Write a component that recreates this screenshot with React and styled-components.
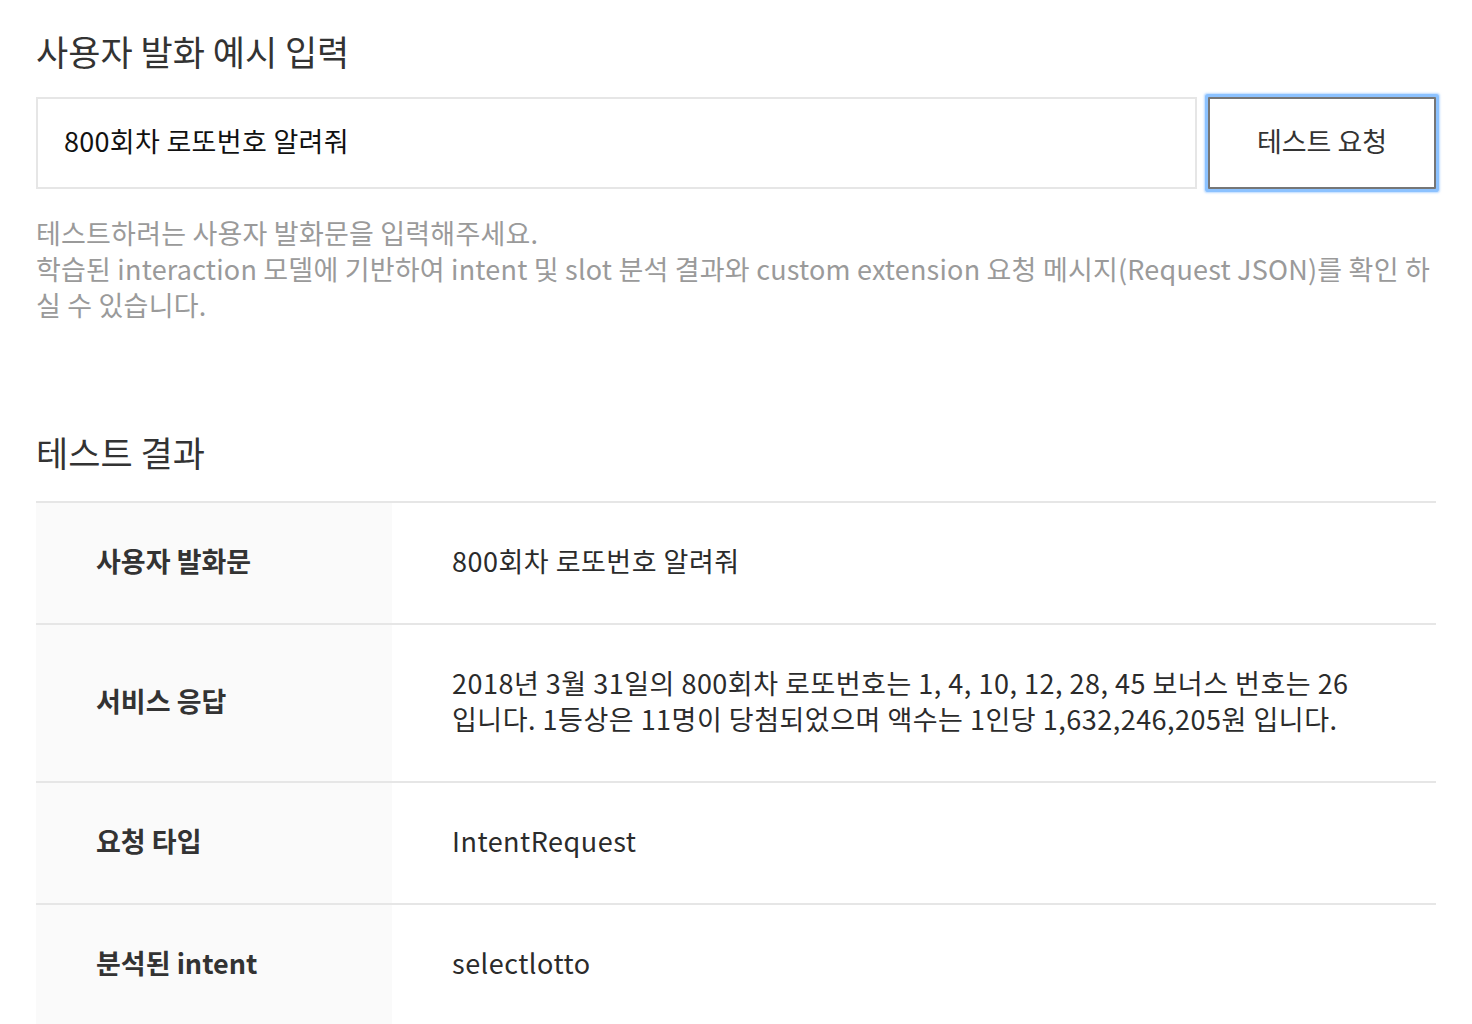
import React from "react";
import styled, { createGlobalStyle } from "styled-components";

const GlobalStyle = createGlobalStyle`
  body {
    margin: 0;
    background: #ffffff;
    font-family: "Noto Sans CJK KR", "Noto Sans", sans-serif;
    color: #333333;
  }
`;

const Page = styled.div`
  width: 1400px;
  padding: 27px 0 0 36px;
`;

const Heading = styled.h2`
  margin: 0;
  font-size: 35px;
  line-height: 48px;
  font-weight: 400;
  color: #333333;
`;

const InputRow = styled.div`
  display: flex;
  align-items: stretch;
  gap: 11px;
  margin-top: 22px;
`;

const TextBox = styled.div`
  box-sizing: border-box;
  width: 1161px;
  height: 92px;
  border: 2px solid #e6e6e6;
  padding: 0 26px 5px;
  display: flex;
  align-items: center;
  font-size: 27px;
  color: #111111;
  letter-spacing: 0.3px;
`;

const TestButton = styled.button`
  box-sizing: border-box;
  width: 228px;
  height: 92px;
  padding: 0 0 5px;
  border: 2px solid #767676;
  background: #ffffff;
  font-family: inherit;
  font-size: 27px;
  color: #333333;
  box-shadow: 0 0 0 3px #8cc2ff, 0 0 2px 4px rgba(140, 194, 255, 0.6);
  border-radius: 1px;
`;

const Help = styled.p`
  margin: 26px 0 0;
  font-size: 27px;
  line-height: 36px;
  color: #9a9a9a;
  letter-spacing: 0.2px;
`;

const ResultHeading = styled(Heading)`
  margin-top: 105px;
`;

const Table = styled.div`
  margin-top: 25px;
  border-top: 2px solid #e6e6e6;
`;

const Row = styled.div`
  display: grid;
  grid-template-columns: 356px 1fr;
  border-bottom: 2px solid #e6e6e6;
`;

const Label = styled.div`
  background: #fafafa;
  padding: 40px 0 44px 60px;
  font-size: 27px;
  line-height: 36px;
  font-weight: 700;
  color: #333333;
  display: flex;
  align-items: center;
`;

const Value = styled.div`
  padding: 40px 34px 44px 60px;
  font-size: 27px;
  line-height: 36px;
  color: #2b2b2b;
  letter-spacing: 0.5px;
  word-break: keep-all;
`;

const rows = [
  ["사용자 발화문", "800회차 로또번호 알려줘"],
  [
    "서비스 응답",
    "2018년 3월 31일의 800회차 로또번호는 1, 4, 10, 12, 28, 45 보너스 번호는 26 입니다. 1등상은 11명이 당첨되었으며 액수는 1인당 1,632,246,205원 입니다.",
  ],
  ["요청 타입", "IntentRequest"],
  ["분석된 intent", "selectlotto"],
];

export default function App() {
  return (
    <Page>
      <GlobalStyle />
      <Heading>사용자 발화 예시 입력</Heading>
      <InputRow>
        <TextBox>800회차 로또번호 알려줘</TextBox>
        <TestButton>테스트 요청</TestButton>
      </InputRow>
      <Help>
        테스트하려는 사용자 발화문을 입력해주세요.
        <br />
        학습된 interaction 모델에 기반하여 intent 및 slot 분석 결과와 custom extension 요청 메시지(Request JSON)를 확인 하
        <br />
        실 수 있습니다.
      </Help>
      <ResultHeading>테스트 결과</ResultHeading>
      <Table>
        {rows.map(([label, value]) => (
          <Row key={label}>
            <Label>{label}</Label>
            <Value>{value}</Value>
          </Row>
        ))}
      </Table>
    </Page>
  );
}
